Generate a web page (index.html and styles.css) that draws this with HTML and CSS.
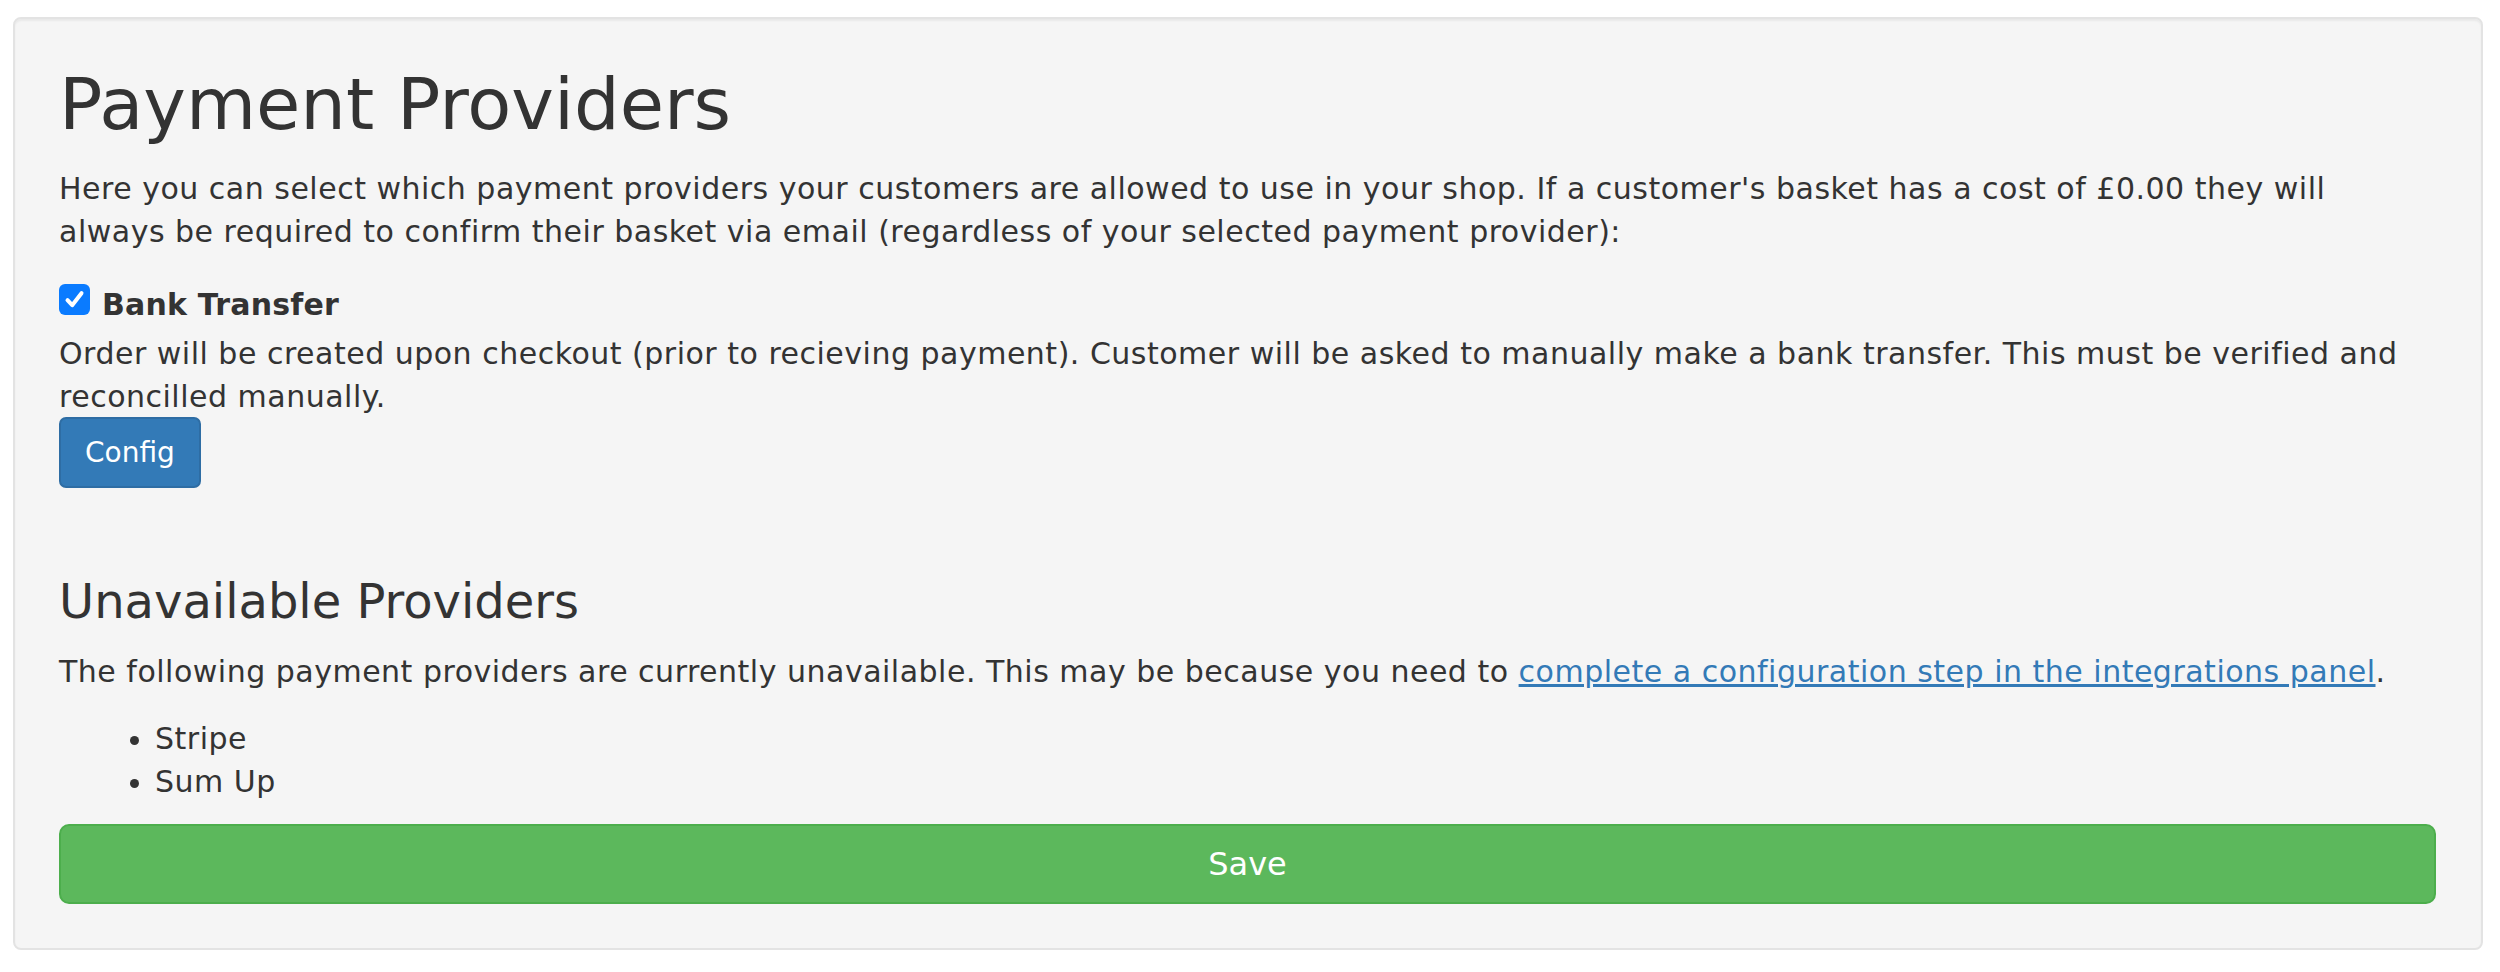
FILE: index.html
```html
<!DOCTYPE html>
<html lang="en">
<head>
<meta charset="utf-8">
<title>Payment Providers</title>
<link rel="stylesheet" href="styles.css">
</head>
<body>
<div class="well">
  <h1 class="title">Payment Providers</h1>
  <p class="text intro">Here you can select which payment providers your customers are allowed to use in your shop. If a customer's basket has a cost of £0.00 they will<br>always be required to confirm their basket via email (regardless of your selected payment provider):</p>

  <div class="provider">
    <label class="provider-label">
      <span class="checkbox" aria-hidden="true">
        <svg viewBox="0 0 31 31" width="31" height="31"><path d="M8.5 16.2 L13.2 21.2 L22.5 9.2" fill="none" stroke="#ffffff" stroke-width="4" stroke-linecap="round" stroke-linejoin="round"/></svg>
      </span>
      <span class="provider-name">Bank Transfer</span>
    </label>
    <p class="text provider-desc">Order will be created upon checkout (prior to recieving payment). Customer will be asked to manually make a bank transfer. This must be verified and<br>reconcilled manually.</p>
    <button class="btn btn-config" type="button">Config</button>
  </div>

  <h3 class="subtitle">Unavailable Providers</h3>
  <p class="text unavail">The following payment providers are currently unavailable. This may be because you need to <a href="#" class="link">complete a configuration step in the integrations panel</a>.</p>
  <ul class="text unavail-list">
    <li>Stripe</li>
    <li>Sum Up</li>
  </ul>

  <button class="btn btn-save" type="button">Save</button>
</div>
</body>
</html>
```
FILE: styles.css
```css
html, body {
  margin: 0;
  padding: 0;
  background: #ffffff;
}

body {
  font-family: "DejaVu Sans", Verdana, sans-serif;
  font-size: 28px;
  line-height: 43px;
  color: #333333;
}

.well {
  margin: 17px 17px 0 13px;
  padding: 46px 45px 44px 44px;
  background: #f5f5f5;
  border: 2px solid #e3e3e3;
  border-radius: 8px;
  box-shadow: inset 0 2px 2px rgba(0, 0, 0, 0.05);
}

.title {
  margin: 0 0 24px 0;
  font-size: 72px;
  line-height: 79px;
  font-weight: normal;
  color: #333333;
}

.text {
  font-size: 30px;
  line-height: 42.86px;
  letter-spacing: 0.5px;
}

.intro {
  margin: 0 0 29px 0;
}

.provider-label {
  display: flex;
  align-items: flex-start;
  gap: 12px;
  margin-bottom: 7px;
  font-size: 30px;
  line-height: 43px;
}

.checkbox {
  display: block;
  width: 31px;
  height: 31px;
  margin-top: 1px;
  background: #0a7bff;
  border-radius: 6px;
  flex: none;
}

.checkbox svg {
  display: block;
}

.provider-name {
  font-weight: bold;
  letter-spacing: 0.2px;
}

.provider-desc {
  margin: 0;
}

.btn {
  display: block;
  font-family: "DejaVu Sans", Verdana, sans-serif;
  color: #ffffff;
  border-style: solid;
  border-width: 2px;
  cursor: pointer;
}

.btn-config {
  margin-top: -1px;
  padding: 12px 24px;
  font-size: 28px;
  line-height: 43px;
  background: #337ab7;
  border-color: #2e6da4;
  border-radius: 7px;
}

.subtitle {
  margin: 87px 0 23px 0;
  font-size: 48px;
  line-height: 53px;
  font-weight: normal;
  color: #333333;
}

.unavail {
  margin: 0 0 24px 0;
  white-space: nowrap;
}

.link {
  color: #337ab7;
  text-decoration: underline;
}

.unavail-list {
  margin: 0 0 20px 0;
  padding-left: 96px;
}

.btn-save {
  width: 100%;
  padding: 16px 24px;
  font-size: 32px;
  line-height: 44px;
  background: #5cb85c;
  border-color: #4cae4c;
  border-radius: 10px;
}
```
